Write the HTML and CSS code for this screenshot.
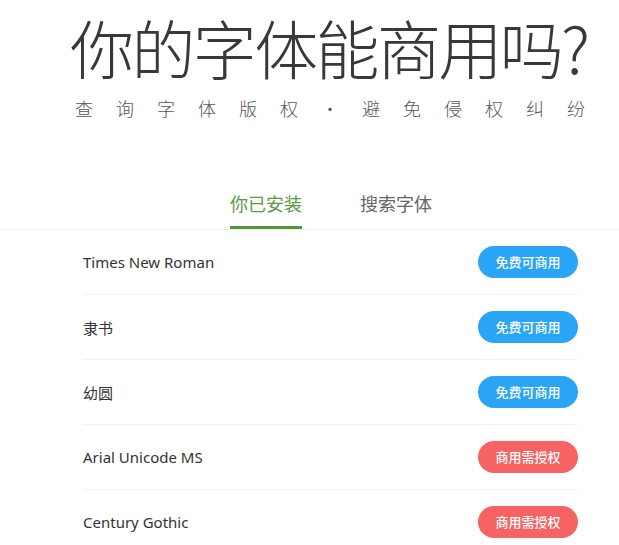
FILE: index.html
```html
<!doctype html>
<html lang="zh">
<head>
    <meta charset="UTF-8">
    <title>你的字体能商用吗?</title>
    <link rel="stylesheet" href="styles.css">
</head>
<body>

<div id="app">
    <header>
        <h1 class="title">你的字体能商用吗?</h1>
        <p class="slogan">查询字体版权·避免侵权纠纷</p>
    </header>

    <nav class="tabs">
        <span class="tab active">你已安装</span>
        <span class="tab">搜索字体</span>
    </nav>

    <ul class="fonts">
        <li><span class="name">Times New Roman</span><span class="tag free">免费可商用</span></li>
        <li><span class="name">隶书</span><span class="tag free">免费可商用</span></li>
        <li><span class="name">幼圆</span><span class="tag free">免费可商用</span></li>
        <li><span class="name">Arial Unicode MS</span><span class="tag paid">商用需授权</span></li>
        <li><span class="name">Century Gothic</span><span class="tag paid">商用需授权</span></li>
    </ul>
</div>

</body>
</html>
```

FILE: styles.css
```css
* {
    margin: 0;
    padding: 0;
}

ul {
    list-style: none;
}

html, body {
    background: #fff;
    overflow: hidden;
}

#app {
    width: 619px;
    height: 545px;
    font-family: "Noto Sans", "Noto Sans CJK SC", sans-serif;
    color: #333;
}

header {
    padding: 0 0 0 70px;
}

header .title {
    font-size: 64px;
    line-height: 93px;
    font-weight: 300;
    color: #383838;
    letter-spacing: -2.6px;
    white-space: nowrap;
    font-family: "Noto Sans CJK SC", sans-serif;
}

header .slogan {
    margin-top: 6px;
    padding-left: 5px;
    font-size: 18px;
    line-height: 18px;
    letter-spacing: 23px;
    color: #555;
    font-family: "Noto Sans CJK SC", sans-serif;
    font-weight: 300;
}

.tabs {
    margin-top: 77px;
    padding-left: 230px;
    display: flex;
    gap: 58px;
    border-bottom: 1px solid #f0f0f0;
}

.tabs .tab {
    font-size: 18px;
    line-height: 18px;
    padding-bottom: 14px;
    color: #666;
    font-family: "Noto Sans CJK SC", sans-serif;
    border-bottom: 3px solid transparent;
}

.tabs .tab.active {
    color: #5b9a43;
    border-bottom-color: #4e9a2e;
}

.fonts {
    margin: 0 41px 0 83px;
}

.fonts li {
    height: 64px;
    display: flex;
    align-items: center;
    justify-content: space-between;
    border-bottom: 1px solid #f2f2f2;
}

.fonts .name {
    font-size: 15px;
    color: #333;
}

.fonts .tag {
    width: 100px;
    height: 32px;
    line-height: 32px;
    border-radius: 16px;
    text-align: center;
    color: #fff;
    font-size: 13px;
    font-family: "Noto Sans CJK SC", sans-serif;
    font-weight: 500;
}

.fonts .tag.free {
    background: #2aa5f5;
}

.fonts .tag.paid {
    background: #f76262;
}
```
